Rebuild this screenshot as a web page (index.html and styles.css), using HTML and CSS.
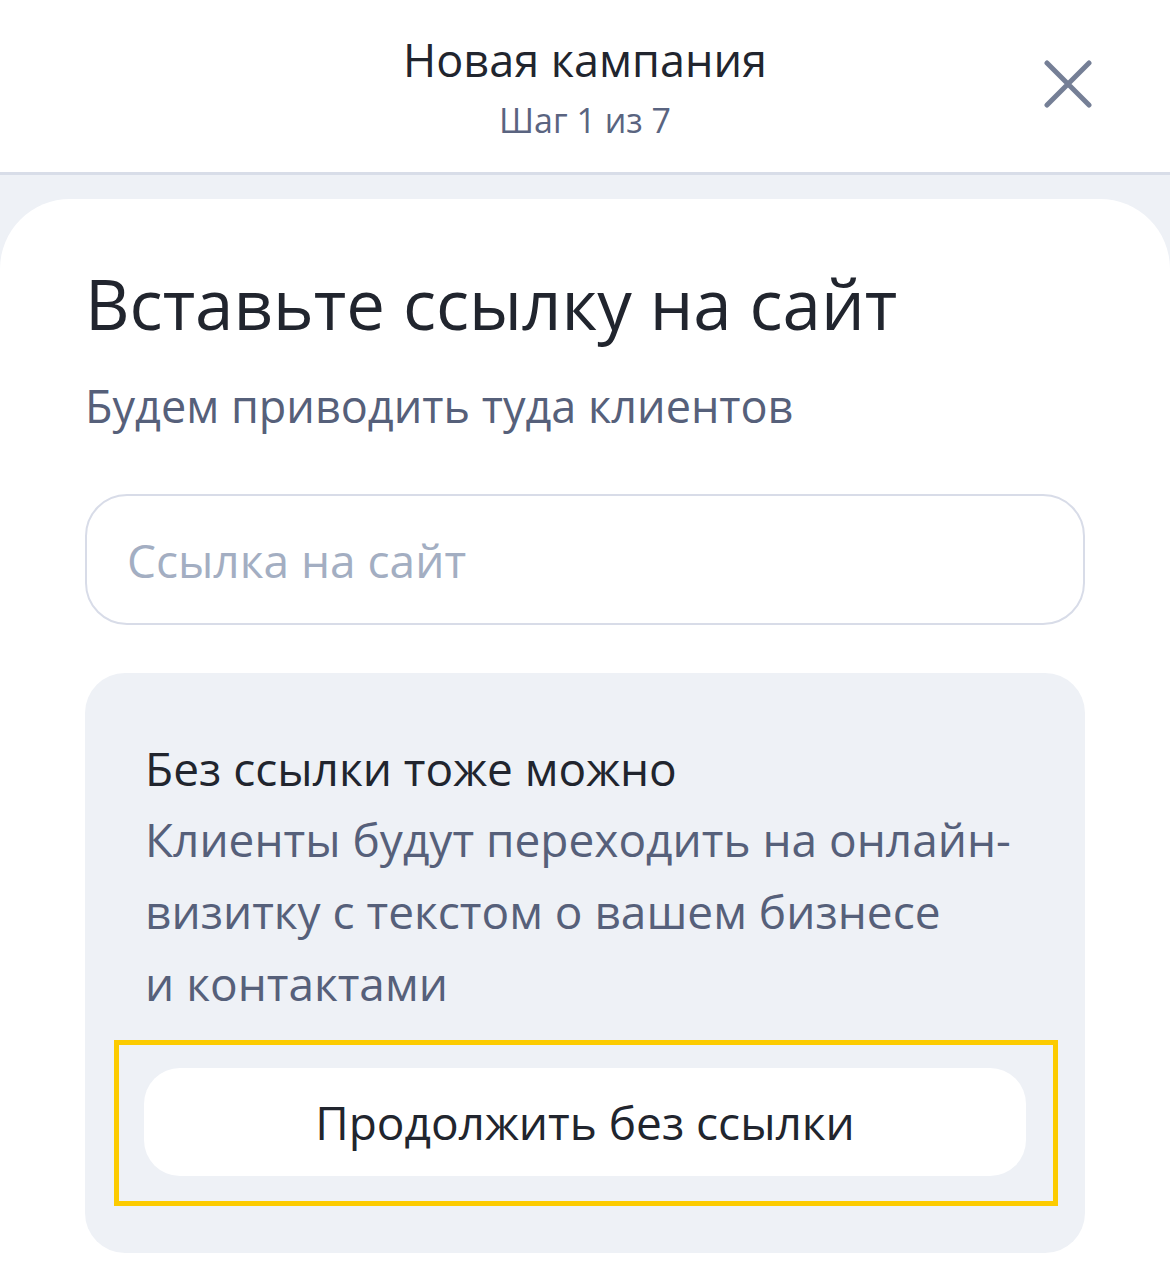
FILE: index.html
```html
<!DOCTYPE html>
<html>

<head>
    <meta name="viewport" content="width=device-width, initial-scale=1">
    <title>Новая кампания</title>
    <link rel="stylesheet" href="styles.css">
</head>

<body>
    <header class="topbar">
        <div class="topbar-title">Новая кампания</div>
        <div class="topbar-step">Шаг 1 из 7</div>
        <button type="button" class="close-btn" aria-label="Закрыть">
            <svg width="48" height="48" viewBox="0 0 48 48">
                <path d="M3 3 L45 45 M45 3 L3 45" stroke="#757f96" stroke-width="5" stroke-linecap="round" fill="none"/>
            </svg>
        </button>
    </header>

    <main class="page">
        <div class="card">
            <h1>Вставьте ссылку на сайт</h1>
            <p class="lead">Будем приводить туда клиентов</p>

            <input type="text" class="url-input" placeholder="Ссылка на сайт">

            <div class="nolink">
                <div class="nolink-title">Без ссылки тоже можно</div>
                <div class="nolink-text">Клиенты будут переходить на онлайн-<br>визитку с текстом о вашем бизнесе<br>и контактами</div>
                <div class="focus-frame">
                    <button type="button" class="continue-btn">Продолжить без ссылки</button>
                </div>
            </div>
        </div>
    </main>
</body>

</html>
```

FILE: styles.css
```css
body {
    font-family: "Open Sans", "Noto Sans", sans-serif;
    margin: 0;
    padding: 0;
    background-color: #eef1f6;
    color: #21252e;
    height: 1286px;
    overflow: hidden;
}

.topbar {
    position: relative;
    height: 175px;
    background-color: #fff;
    border-bottom: 3px solid #d8dde8;
    text-align: center;
    box-sizing: border-box;
    padding-top: 28px;
}

.topbar-title {
    font-size: 45px;
    line-height: 64px;
    color: #21252e;
}

.topbar-step {
    font-size: 34px;
    line-height: 48px;
    color: #5a6480;
    margin-top: 4px;
}

.close-btn {
    position: absolute;
    top: 60px;
    right: 78px;
    padding: 0;
    border: none;
    background: none;
    cursor: pointer;
}

.close-btn svg {
    display: block;
}

.page {
    padding-top: 24px;
}

.card {
    background-color: #fff;
    border-radius: 70px 70px 0 0;
    padding: 59px 85px 40px;
    min-height: 1100px;
    box-sizing: border-box;
}

h1 {
    font-size: 69px;
    font-weight: 400;
    line-height: 90px;
    margin: 0;
    color: #21252e;
}

.lead {
    font-size: 45px;
    line-height: 56px;
    color: #56607a;
    margin: 30px 0 0;
}

.url-input {
    display: block;
    width: 100%;
    height: 131px;
    margin-top: 60px;
    padding: 0 40px;
    border: 2px solid #d8dce8;
    border-radius: 42px;
    box-sizing: border-box;
    font-family: inherit;
    font-size: 46px;
    color: #21252e;
    outline: none;
}

.url-input::placeholder {
    color: #a3aec2;
}

.nolink {
    margin-top: 48px;
    background-color: #eef1f6;
    border-radius: 40px;
    padding: 65px 27px 47px 29px;
}

.nolink-title {
    font-size: 46px;
    line-height: 60px;
    padding: 0 31px;
}

.nolink-text {
    font-size: 46px;
    line-height: 72px;
    color: #56607a;
    padding: 0 31px;
    margin-top: 5px;
}

.focus-frame {
    margin-top: 21px;
    border: 5px solid #fccb00;
    padding: 23px 27px 25px 25px;
}

.continue-btn {
    display: block;
    width: 100%;
    height: 108px;
    border: none;
    border-radius: 36px;
    background-color: #fff;
    font-family: inherit;
    font-size: 46px;
    color: #21252e;
    cursor: pointer;
}
```
